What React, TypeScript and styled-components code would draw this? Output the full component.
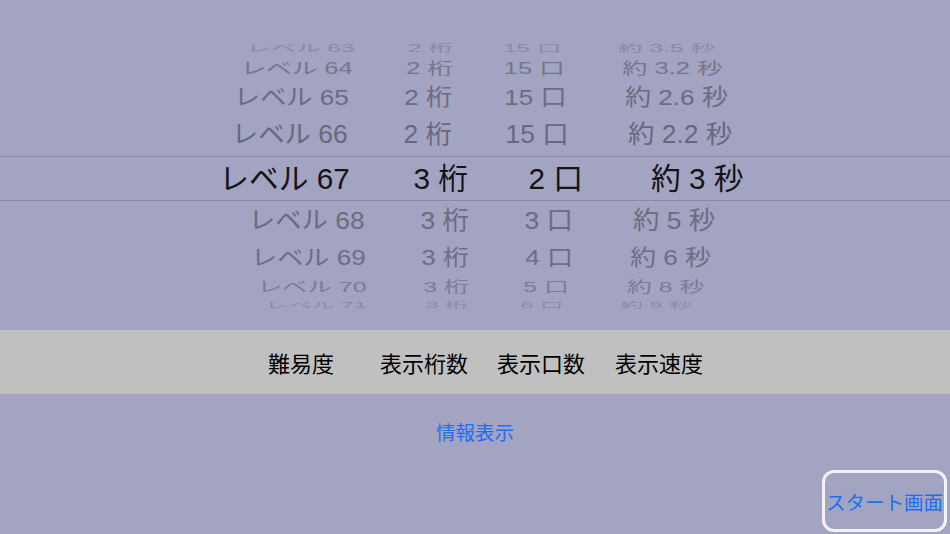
import React from "react";
import styled, { createGlobalStyle } from "styled-components";

const Global = createGlobalStyle`
  html, body { margin: 0; padding: 0; background: #a3a3c2; }
  body { font-family: "Liberation Sans", "Noto Sans CJK JP", sans-serif; }
  #root { height: 534px; }
`;

const Page = styled.div`
  width: 950px;
  height: 534px;
  display: flex;
  flex-direction: column;
  background: #a3a3c2;
  overflow: hidden;
  font-family: "Liberation Sans", "Noto Sans CJK JP", sans-serif;
`;

const Picker = styled.div`
  height: 330px;
  box-sizing: border-box;
  padding-top: 40px;
  display: flex;
  flex-direction: column;
`;

const Row = styled.div<{ $h: number; $sel?: boolean }>`
  height: ${(p) => p.$h}px;
  flex: none;
  display: grid;
  grid-template-columns: 360px 100px 120px 1fr;
  box-sizing: border-box;
  border-top: ${(p) => (p.$sel ? "1px solid #8a8aa6" : "none")};
  border-bottom: ${(p) => (p.$sel ? "1px solid #8a8aa6" : "none")};
`;

const Cell = styled.div<{ $align: "left" | "right" }>`
  display: flex;
  align-items: center;
  justify-content: ${(p) => (p.$align === "right" ? "flex-end" : "flex-start")};
  min-height: 0;
  white-space: nowrap;
`;

const CellText = styled.span<{ $align: "left" | "right" }>`
  display: block;
  flex: none;
  font-size: 30px;
  line-height: 30px;
  height: 30px;
  transform-origin: ${(p) => (p.$align === "right" ? "right center" : "left center")};
`;

const Bar = styled.div`
  height: 64px;
  flex: none;
  background: #c0c0c0;
  display: flex;
  align-items: center;
  padding-left: 268px;
  box-sizing: border-box;
`;

const BarLabel = styled.div<{ $ml: number }>`
  margin-left: ${(p) => p.$ml}px;
  font-family: "Noto Sans CJK JP", sans-serif;
  font-size: 22px;
  line-height: 26px;
  color: #000;
  white-space: nowrap;
`;

const InfoLink = styled.div`
  margin-top: 26px;
  align-self: center;
  font-family: "Noto Sans CJK JP", sans-serif;
  font-size: 19.5px;
  line-height: 24px;
  color: #1b6ff2;
`;

const Footer = styled.div`
  margin-top: auto;
  display: flex;
  justify-content: flex-end;
  padding: 0 3px 2px 0;
`;

const StartButton = styled.button`
  width: 125px;
  height: 62px;
  box-sizing: border-box;
  border: 3px solid #f2f2f6;
  border-radius: 12px;
  background: transparent;
  padding: 0;
  font-family: "Noto Sans CJK JP", sans-serif;
  font-size: 19.5px;
  color: #1b6ff2;
  white-space: nowrap;
  display: flex;
  align-items: center;
  justify-content: center;
`;

type RowData = {
  h: number;
  sel?: boolean;
  texts: [string, string, string, string];
  anchors: [number, number, number, number];
  sx: number;
  sy: number;
  dy: number;
  color: string;
};

// column base edges: col1 right 360, col2 right 460, col3 right 580, col4 left 580
const bases = [360, 460, 580, 580];
const aligns: ("left" | "right")[] = ["right", "right", "right", "left"];

const rows: RowData[] = [
  { h: 18, texts: ["レベル 63", "2 桁", "15 口", "約 3.5 秒"], anchors: [355, 453, 562, 618], sx: 0.82, sy: 0.34, dy: 0, color: "#8a8aa6" },
  { h: 22, texts: ["レベル 64", "2 桁", "15 口", "約 3.2 秒"], anchors: [353, 453, 565, 622], sx: 0.85, sy: 0.53, dy: 0, color: "#767688" },
  { h: 34, texts: ["レベル 65", "2 桁", "15 口", "約 2.6 秒"], anchors: [349, 452, 567, 625], sx: 0.87, sy: 0.75, dy: 0, color: "#6c6c7e" },
  { h: 42, texts: ["レベル 66", "2 桁", "15 口", "約 2.2 秒"], anchors: [348, 452, 569, 628], sx: 0.88, sy: 0.84, dy: 0, color: "#68687a" },
  { h: 45, sel: true, texts: ["レベル 67", "3 桁", "2 口", "約 3 秒"], anchors: [350, 468, 583, 651], sx: 0.99, sy: 1.0, dy: 0, color: "#141418" },
  { h: 39, texts: ["レベル 68", "3 桁", "3 口", "約 5 秒"], anchors: [365, 469, 573, 633], sx: 0.88, sy: 0.82, dy: 0, color: "#6c6c7e" },
  { h: 36, texts: ["レベル 69", "3 桁", "4 口", "約 6 秒"], anchors: [366, 469, 573, 630], sx: 0.87, sy: 0.72, dy: 0, color: "#6e6e82" },
  { h: 22, texts: ["レベル 70", "3 桁", "5 口", "約 8 秒"], anchors: [367, 469, 569, 627], sx: 0.83, sy: 0.48, dy: 0, color: "#7c7c94" },
  { h: 14, texts: ["レベル 71", "3 桁", "6 口", "約 9 秒"], anchors: [367, 468, 563, 620], sx: 0.77, sy: 0.28, dy: 0, color: "#8c8caa" },
];

const labels: { text: string; ml: number }[] = [
  { text: "難易度", ml: 0 },
  { text: "表示桁数", ml: 46 },
  { text: "表示口数", ml: 29 },
  { text: "表示速度", ml: 30 },
];

export default function App() {
  return (
    <>
      <Global />
      <Page>
        <Picker>
          {rows.map((r, i) => (
            <Row key={i} $h={r.h} $sel={r.sel} style={{ color: r.color }}>
              {r.texts.map((t, c) => (
                <Cell key={c} $align={aligns[c]}>
                  <CellText
                    $align={aligns[c]}
                    style={{
                      transform: `translate(${r.anchors[c] - bases[c]}px, ${r.dy}px) scale(${r.sx}, ${r.sy})`,
                    }}
                  >
                    {t}
                  </CellText>
                </Cell>
              ))}
            </Row>
          ))}
        </Picker>
        <Bar>
          {labels.map((l) => (
            <BarLabel key={l.text} $ml={l.ml}>
              {l.text}
            </BarLabel>
          ))}
        </Bar>
        <InfoLink>情報表示</InfoLink>
        <Footer>
          <StartButton>スタート画面</StartButton>
        </Footer>
      </Page>
    </>
  );
}
